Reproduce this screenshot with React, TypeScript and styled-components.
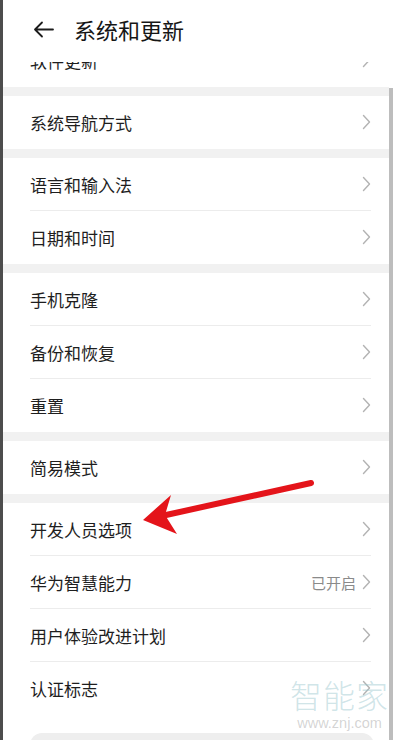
import React from "react";
import styled, { createGlobalStyle } from "styled-components";

const GlobalStyle = createGlobalStyle`
  html, body {
    margin: 0;
    padding: 0;
    background: #ffffff;
  }
  body {
    font-family: "Noto Sans CJK SC", "Noto Sans", sans-serif;
  }
`;

interface Item {
  label: string;
  value?: string;
}

const groups: Item[][] = [
  [{ label: "系统导航方式" }],
  [{ label: "语言和输入法" }, { label: "日期和时间" }],
  [{ label: "手机克隆" }, { label: "备份和恢复" }, { label: "重置" }],
  [{ label: "简易模式" }],
  [
    { label: "开发人员选项" },
    { label: "华为智慧能力", value: "已开启" },
    { label: "用户体验改进计划" },
    { label: "认证标志" },
  ],
];

const Chevron: React.FC = () => (
  <svg width="9" height="16" viewBox="0 0 9 16">
    <polyline
      points="1.5,1.5 7.5,8 1.5,14.5"
      fill="none"
      stroke="#b3b3b3"
      strokeWidth="1.4"
      strokeLinecap="round"
      strokeLinejoin="round"
    />
  </svg>
);

const BackArrow: React.FC = () => (
  <svg width="21" height="17" viewBox="0 0 21 17">
    <path
      d="M20 8.5H2 M9 1.5L2 8.5l7 7"
      fill="none"
      stroke="#1c1c1c"
      strokeWidth="1.8"
      strokeLinecap="round"
      strokeLinejoin="round"
    />
  </svg>
);

const SettingRow: React.FC<{ item: Item; last: boolean }> = ({ item, last }) => (
  <Row $divider={!last}>
    <Label>{item.label}</Label>
    <Trail>
      {item.value && <Value>{item.value}</Value>}
      <Chevron />
    </Trail>
  </Row>
);

const App: React.FC = () => {
  return (
    <>
      <GlobalStyle />
      <Screen>
        <EdgeStrip />
        <Main>
          <Header>
            <BackArrow />
            <Title>系统和更新</Title>
          </Header>
          <ClippedRow>
            <Row $divider={false}>
              <Label>软件更新</Label>
              <Trail>
                <Chevron />
              </Trail>
            </Row>
          </ClippedRow>
          {groups.map((group, gi) => (
            <React.Fragment key={gi}>
              <Gap />
              <Group>
                {group.map((item, i) => (
                  <SettingRow key={item.label} item={item} last={i === group.length - 1} />
                ))}
              </Group>
            </React.Fragment>
          ))}
          <BottomSpace>
            <BottomCard />
          </BottomSpace>
        </Main>
        <Gutter>
          <ScrollThumb />
        </Gutter>

        <Watermark>
          <WatermarkBig>智能家</WatermarkBig>
          <WatermarkSmall>www.znj.com</WatermarkSmall>
        </Watermark>

        <ArrowOverlay width="400" height="740" viewBox="0 0 400 740">
          <line
            x1="311"
            y1="483"
            x2="166"
            y2="515"
            stroke="#e4141a"
            strokeWidth="6"
            strokeLinecap="round"
          />
          <polygon points="143,520 171,495 165,515 177,534" fill="#e4141a" />
        </ArrowOverlay>
      </Screen>
    </>
  );
};

const Screen = styled.div`
  position: relative;
  width: 400px;
  height: 740px;
  overflow: hidden;
  display: flex;
  background: #ffffff;
`;

const EdgeStrip = styled.div`
  width: 3px;
  flex: none;
  background: #4d4d4d;
`;

const Main = styled.div`
  flex: 1;
  display: flex;
  flex-direction: column;
  min-width: 0;
`;

const Gutter = styled.div`
  width: 11px;
  flex: none;
  padding-top: 88px;
  box-sizing: border-box;
`;

const ScrollThumb = styled.div`
  width: 4px;
  height: 100%;
  background: #bdbdbd;
`;

const Header = styled.header`
  height: 62px;
  flex: none;
  display: flex;
  align-items: center;
  padding: 0 0 4px 30px;
  box-sizing: border-box;
  gap: 20px;
  background: #ffffff;
`;

const Title = styled.h1`
  margin: 0;
  font-size: 22px;
  font-weight: 400;
  color: #161616;
`;

const ClippedRow = styled.div`
  height: 25px;
  flex: none;
  overflow: hidden;
  display: flex;
  flex-direction: column;
  justify-content: flex-end;
`;

const Gap = styled.div`
  height: 9px;
  flex: none;
  background: #f1f1f1;
`;

const Group = styled.section`
  display: flex;
  flex-direction: column;
`;

const Row = styled.div<{ $divider: boolean }>`
  height: 53px;
  flex: none;
  box-sizing: border-box;
  margin: 0 18px 0 27px;
  display: flex;
  align-items: center;
  justify-content: space-between;
  border-bottom: 1px solid ${(p) => (p.$divider ? "#ececec" : "transparent")};
`;

const Label = styled.span`
  font-size: 17px;
  color: #1e1e1e;
  line-height: 1;
`;

const Trail = styled.div`
  display: flex;
  align-items: center;
  gap: 6px;
`;

const Value = styled.span`
  font-size: 15px;
  color: #8a8a8a;
`;

const BottomSpace = styled.div`
  flex: 1;
  padding: 18px 15px 0 27px;
`;

const BottomCard = styled.div`
  height: 40px;
  border-radius: 12px;
  background: #eeeeee;
`;

const Watermark = styled.div`
  position: absolute;
  left: 290px;
  top: 678px;
  display: flex;
  flex-direction: column;
  align-items: center;
  gap: 6px;
  pointer-events: none;
`;

const WatermarkBig = styled.div`
  font-family: "Noto Sans CJK SC", sans-serif;
  font-weight: 300;
  font-size: 32px;
  line-height: 32px;
  letter-spacing: 1px;
  color: rgba(150, 196, 204, 0.45);
`;

const WatermarkSmall = styled.div`
  font-family: "Liberation Sans", "DejaVu Sans", sans-serif;
  font-size: 14.5px;
  line-height: 15px;
  color: rgba(160, 160, 160, 0.45);
`;

const ArrowOverlay = styled.svg`
  position: absolute;
  left: 0;
  top: 0;
  pointer-events: none;
`;

export default App;
